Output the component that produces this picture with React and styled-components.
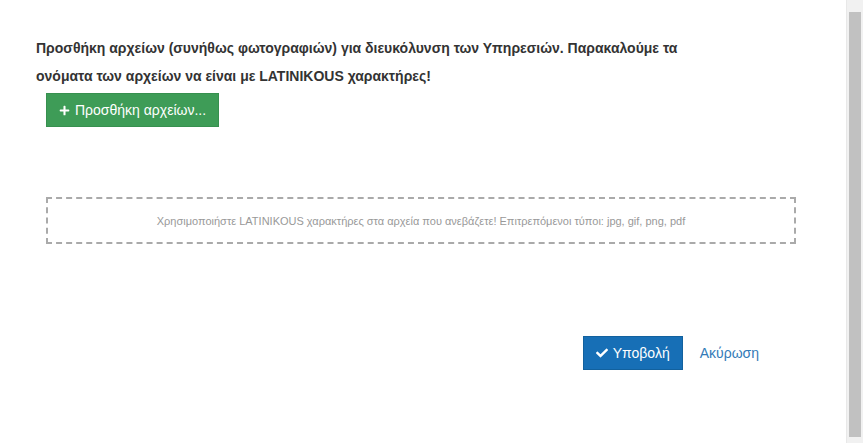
import React from "react";
import styled, { createGlobalStyle } from "styled-components";
import { FaPlus, FaCheck } from "react-icons/fa";

const GlobalStyle = createGlobalStyle`
  html, body {
    margin: 0;
    padding: 0;
    background: #fff;
    font-family: "Liberation Sans", Arial, sans-serif;
    overflow: hidden;
  }
  * { box-sizing: border-box; }
`;

function App() {
  return (
    <Page>
      <GlobalStyle />
      <Main>
        <Intro>
          Προσθήκη αρχείων (συνήθως φωτογραφιών) για διευκόλυνση των Υπηρεσιών. Παρακαλούμε τα
          ονόματα των αρχείων να είναι με LATINIKOUS χαρακτήρες!
        </Intro>
        <Button variant="success">
          <FaPlus size={11} /> Προσθήκη αρχείων...
        </Button>
        <DropZone>
          Χρησιμοποιήστε LATINIKOUS χαρακτήρες στα αρχεία που ανεβάζετε! Επιτρεπόμενοι τύποι: jpg, gif, png, pdf
        </DropZone>
        <Footer>
          <Button variant="primary">
            <FaCheck size={12} /> Υποβολή
          </Button>
          <CancelLink href="#">Ακύρωση</CancelLink>
        </Footer>
      </Main>
      <ScrollTrack>
        <ScrollThumb />
      </ScrollTrack>
    </Page>
  );
}

const Page = styled.div`
  display: flex;
  width: 863px;
  height: 443px;
`;

const Main = styled.div`
  flex: 1;
  min-width: 0;
  padding: 34px 87px 0 36px;
  display: flex;
  flex-direction: column;
  align-items: flex-start;
`;

const Intro = styled.p`
  margin: 0;
  width: 660px;
  font-size: 14px;
  font-weight: bold;
  line-height: 28px;
  color: #333;
`;

const Button = styled.button`
  display: inline-flex;
  align-items: center;
  gap: 5px;
  height: 34px;
  padding: 0 12px;
  border: 1px solid ${(p) => (p.variant === "success" ? "#37904f" : "#12619e")};
  background: ${(p) => (p.variant === "success" ? "#3e9c57" : "#176fb6")};
  color: #fff;
  font-family: "Liberation Sans", Arial, sans-serif;
  font-size: 14px;
  border-radius: 0;
  cursor: pointer;
  margin: ${(p) => (p.variant === "success" ? "3px 0 0 10px" : "0")};
`;

const DropZone = styled.div`
  width: 750px;
  flex-shrink: 0;
  height: 47px;
  margin: 70px 0 0 10px;
  border: 2px dashed #aaa;
  display: flex;
  align-items: center;
  justify-content: center;
  font-size: 11px;
  color: #999;
`;

const Footer = styled.div`
  align-self: stretch;
  display: flex;
  justify-content: flex-end;
  align-items: center;
  gap: 17px;
  margin-top: 92px;
`;

const CancelLink = styled.a`
  color: #337ab7;
  font-size: 14px;
  text-decoration: none;
`;

const ScrollTrack = styled.div`
  width: 17px;
  flex-shrink: 0;
  background: #f1f1f1;
  border-left: 1px solid #e8e8e8;
  padding: 12px 2px 6px;
  display: flex;
`;

const ScrollThumb = styled.div`
  flex: 1;
  background: #c1c1c1;
`;

export default App;
